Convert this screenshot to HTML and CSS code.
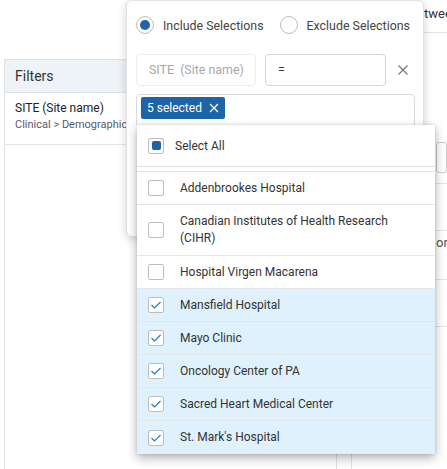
FILE: index.html
```html
<!DOCTYPE html>
<html>
<head>
<meta charset="utf-8">
<link rel="stylesheet" href="styles.css">
</head>
<body>
<div class="page">
  <div class="filters">
    <div class="filters-head">Filters</div>
    <div class="filter-row">
      <div class="filter-title">SITE (Site name)</div>
      <div class="filter-path">Clinical &gt; Demographics</div>
    </div>
  </div>
  <div class="main">
    <div class="tab-head">Between</div>
    <div class="main-body">
      <div class="main-input"></div>
      <div class="mrow mrow-a"></div>
      <div class="mrow mrow-b"></div>
      <div class="mrow mrow-c"><span class="or">or</span></div>
      <div class="mrow mrow-d"></div>
    </div>
  </div>
</div>

<div class="card">
  <div class="radios">
    <label class="radio"><span class="radio-dot on"></span>Include Selections</label>
    <label class="radio"><span class="radio-dot"></span>Exclude Selections</label>
  </div>
  <div class="cond-row">
    <div class="field field-disabled">SITE&nbsp; (Site name)</div>
    <div class="field field-op">=</div>
    <span class="close">
      <svg width="12" height="12" viewBox="0 0 12 12"><path d="M1.5 1.5 L10.5 10.5 M10.5 1.5 L1.5 10.5" stroke="#777" stroke-width="1.2" fill="none"/></svg>
    </span>
  </div>
  <div class="multi">
    <span class="chip">5 selected
      <svg width="10" height="10" viewBox="0 0 10 10"><path d="M1 1 L9 9 M9 1 L1 9" stroke="#fff" stroke-width="1.3" fill="none"/></svg>
    </span>
  </div>
</div>

<div class="dropdown">
  <div class="opt-all">
    <span class="cb"><span class="cb-ind"></span></span>
    <span class="opt-all-text">Select All</span>
  </div>
  <div class="opts">
    <div class="opt"><span class="cb"></span><span class="opt-text">Addenbrookes Hospital</span></div>
    <div class="opt opt-tall"><span class="cb"></span><span class="opt-text">Canadian Institutes of Health Research (CIHR)</span></div>
    <div class="opt"><span class="cb"></span><span class="opt-text">Hospital Virgen Macarena</span></div>
    <div class="opt sel"><span class="cb"><svg width="12" height="10" viewBox="0 0 12 10"><path d="M1.5 5 L4.5 8 L10.5 2" stroke="#2a77c6" stroke-width="1.2" fill="none"/></svg></span><span class="opt-text">Mansfield Hospital</span></div>
    <div class="opt sel"><span class="cb"><svg width="12" height="10" viewBox="0 0 12 10"><path d="M1.5 5 L4.5 8 L10.5 2" stroke="#2a77c6" stroke-width="1.2" fill="none"/></svg></span><span class="opt-text">Mayo Clinic</span></div>
    <div class="opt sel"><span class="cb"><svg width="12" height="10" viewBox="0 0 12 10"><path d="M1.5 5 L4.5 8 L10.5 2" stroke="#2a77c6" stroke-width="1.2" fill="none"/></svg></span><span class="opt-text">Oncology Center of PA</span></div>
    <div class="opt sel"><span class="cb"><svg width="12" height="10" viewBox="0 0 12 10"><path d="M1.5 5 L4.5 8 L10.5 2" stroke="#2a77c6" stroke-width="1.2" fill="none"/></svg></span><span class="opt-text">Sacred Heart Medical Center</span></div>
    <div class="opt sel last"><span class="cb"><svg width="12" height="10" viewBox="0 0 12 10"><path d="M1.5 5 L4.5 8 L10.5 2" stroke="#2a77c6" stroke-width="1.2" fill="none"/></svg></span><span class="opt-text">St. Mark's Hospital</span></div>
  </div>
</div>
</body>
</html>
```

FILE: styles.css
```css
* { box-sizing: border-box; }
html, body { margin: 0; padding: 0; }
body {
  width: 447px;
  height: 469px;
  overflow: hidden;
  background: #fff;
  font-family: Roboto, "Liberation Sans", sans-serif;
  color: #333;
  position: relative;
}
.page {
  display: flex;
  gap: 14px;
  padding-left: 4px;
  height: 469px;
}
.filters {
  width: 333px;
  flex: none;
  margin-top: 59px;
  border: 1px solid #dde2e8;
  border-bottom: none;
}
.filters-head {
  height: 33px;
  line-height: 32px;
  background: #eef3f8;
  border-bottom: 1px solid #dde2e8;
  padding-left: 10px;
  font-size: 14px;
  color: #333;
}
.filter-row {
  padding: 7px 10px 11px;
  border-bottom: 1px solid #e3e3e3;
}
.filter-title { font-size: 12px; line-height: 16px; color: #222; }
.filter-path { font-size: 11px; line-height: 17px; color: #5a5a6e; }

.main {
  flex: 1;
  min-width: 0;
  border-left: 1px solid #e3e3e3;
}
.tab-head {
  height: 33px;
  line-height: 28px;
  padding-left: 57px;
  font-size: 13px;
  color: #333;
  border-bottom: 1px solid #e3e3e3;
  white-space: nowrap;
}
.main-body { padding-top: 109px; }
.main-input {
  margin-left: 84px;
  height: 31px;
  border: 1px solid #ccc;
  border-radius: 3px;
}
.mrow { border-bottom: 1px solid #e3e3e3; }
.mrow-a { height: 11px; }
.mrow-b { height: 47px; }
.mrow-c { height: 49px; padding-left: 84px; padding-top: 4px; font-size: 13px; color: #555; }
.mrow-d { height: 47px; }

.card {
  position: absolute;
  left: 126px;
  top: 0;
  width: 298px;
  height: 237px;
  background: #fff;
  border: 1px solid #e2e2e2;
  border-radius: 6px;
  box-shadow: 0 2px 10px rgba(0,0,0,0.18);
  padding: 15px 9px 0 9px;
}
.radios { display: flex; gap: 16px; height: 18px; align-items: center; }
.radio {
  flex: none;
  display: flex;
  align-items: center;
  gap: 9px;
  font-size: 12.4px;
  color: #444;
  white-space: nowrap;
}
.radio-dot {
  flex: none;
  width: 18px;
  height: 18px;
  border-radius: 50%;
  border: 1px solid #bdbdbd;
  display: flex;
  align-items: center;
  justify-content: center;
}
.radio-dot.on::after {
  content: "";
  width: 10px;
  height: 10px;
  border-radius: 50%;
  background: #1f64a6;
}
.cond-row {
  display: flex;
  align-items: center;
  margin-top: 20px;
  gap: 9px;
}
.field {
  flex: none;
  height: 32px;
  border-radius: 4px;
  font-size: 12.4px;
  line-height: 30px;
  padding-left: 12px;
}
.field-disabled {
  width: 120px;
  border: 1px solid #ececec;
  color: #a8a8a8;
  white-space: nowrap;
}
.field-op {
  width: 121px;
  border: 1px solid #d4d4d4;
  color: #333;
}
.close { display: flex; margin-left: 2px; }
.multi {
  margin-top: 8px;
  width: 279px;
  height: 33px;
  border: 1px solid #dadada;
  border-radius: 4px;
  padding: 2px 4px;
}
.chip {
  display: inline-flex;
  align-items: center;
  gap: 7px;
  height: 22px;
  padding: 0 6px 0 6px;
  background: #1d64a6;
  color: #fff;
  font-size: 12px;
  border-radius: 2px;
}

.dropdown {
  position: absolute;
  left: 137px;
  top: 125px;
  width: 298px;
  height: 329px;
  background: #fff;
  box-shadow: 0 4px 10px rgba(0,0,0,0.3), 0 0 3px rgba(0,0,0,0.12);
}
.opt-all {
  height: 42px;
  display: flex;
  align-items: center;
  padding-left: 11px;
  border-bottom: 1px solid #dedede;
}
.opt-all-text { margin-left: 11px; font-size: 12px; color: #333; }
.opts { margin-top: 4px; border-top: 1px solid #e6e6e6; }
.opt {
  min-height: 33px;
  display: flex;
  align-items: center;
  padding: 0 10px 0 11px;
  border-bottom: 1px solid #e6e6e6;
}
.opt.last { border-bottom: none; }
.opt-tall { padding-top: 8px; padding-bottom: 8px; }
.opt-text { margin-left: 16px; font-size: 12px; line-height: 17px; color: #333; }
.opt.sel { background: #dff1fd; }
.cb {
  flex: none;
  width: 16px;
  height: 16px;
  border: 1px solid #bdbdbd;
  border-radius: 2px;
  background: #fff;
  display: flex;
  align-items: center;
  justify-content: center;
}
.cb-ind {
  width: 9px;
  height: 9px;
  background: #1f64a6;
  border-radius: 2px;
}
```
